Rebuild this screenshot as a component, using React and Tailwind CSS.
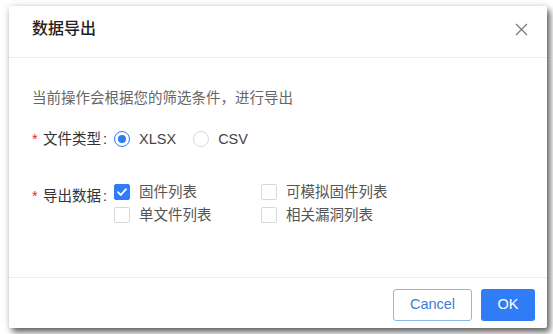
import React, { useState } from 'react';

const font = { fontFamily: '"Liberation Sans", "Noto Sans CJK SC", sans-serif' };

function Radio({ checked, label, onClick }) {
  return (
    <label onClick={onClick} className="flex items-center cursor-pointer">
      <span
        className={`w-[16px] h-[16px] rounded-full border flex items-center justify-center bg-white ${
          checked ? 'border-[#2f7cf6]' : 'border-[#d9d9d9]'
        }`}
      >
        {checked && <span className="w-[8px] h-[8px] rounded-full bg-[#2f7cf6]" />}
      </span>
      <span className="ml-[9px] text-[#444]">{label}</span>
    </label>
  );
}

function Check({ checked, label, onClick }) {
  return (
    <label onClick={onClick} className="flex items-center h-[20px] cursor-pointer">
      <span
        className={`w-[16px] h-[16px] rounded-[2px] border flex items-center justify-center ${
          checked ? 'bg-[#2f7cf6] border-[#2f7cf6]' : 'bg-white border-[#d9d9d9]'
        }`}
      >
        {checked && (
          <svg width="10" height="8" viewBox="0 0 10 8" fill="none">
            <path d="M1 4.2 L3.8 7 L9 1.2" stroke="white" strokeWidth="1.8" strokeLinecap="round" strokeLinejoin="round" />
          </svg>
        )}
      </span>
      <span className="ml-[9px] text-[#555]">{label}</span>
    </label>
  );
}

export default function App() {
  const [type, setType] = useState('xlsx');
  const [items, setItems] = useState({ fw: true, sim: false, single: false, vuln: false });
  const toggle = (k) => setItems({ ...items, [k]: !items[k] });

  return (
    <div className="w-[553px] h-[334px] bg-white overflow-hidden pt-[6px] pl-[9px]" style={font}>
      <div className="w-[538px] h-[322px] bg-white rounded-[2px] flex flex-col shadow-[3px_4px_6px_rgba(0,0,0,0.6),0_0_9px_rgba(0,0,0,0.12)]">
        {/* Header */}
        <div className="h-[52px] border-b border-[#ececec] flex items-center justify-between pl-[23px] pr-[19px] pb-[6px]">
          <span className="text-[16px] leading-[20px] font-medium text-[#222]">数据导出</span>
          <svg width="13" height="13" viewBox="0 0 13 13" className="mt-[1px]">
            <path d="M1 1 L12 12 M12 1 L1 12" stroke="#777" strokeWidth="1.2" />
          </svg>
        </div>

        {/* Body */}
        <div className="flex-1 pl-[23px] pt-[30px] text-[14.5px] leading-[20px]">
          <div className="text-[#666]">当前操作会根据您的筛选条件，进行导出</div>

          <div className="flex items-center mt-[21px]">
            <span className="text-[#f5222d] w-[11px] leading-[20px]">*</span>
            <span className="text-[#333]">文件类型</span>
            <span className="text-[#333] ml-[2px] mr-[7px]">:</span>
            <Radio checked={type === 'xlsx'} label="XLSX" onClick={() => setType('xlsx')} />
            <div className="w-[17px]" />
            <Radio checked={type === 'csv'} label="CSV" onClick={() => setType('csv')} />
          </div>

          <div className="flex items-start mt-[33px]">
            <div className="flex items-center pt-[4px]">
              <span className="text-[#f5222d] w-[11px]">*</span>
              <span className="text-[#333]">导出数据</span>
              <span className="text-[#333] ml-[2px] mr-[7px]">:</span>
            </div>
            <div className="grid grid-cols-[147px_auto] gap-y-[3px]">
              <Check checked={items.fw} label="固件列表" onClick={() => toggle('fw')} />
              <Check checked={items.sim} label="可模拟固件列表" onClick={() => toggle('sim')} />
              <Check checked={items.single} label="单文件列表" onClick={() => toggle('single')} />
              <Check checked={items.vuln} label="相关漏洞列表" onClick={() => toggle('vuln')} />
            </div>
          </div>
        </div>

        {/* Footer */}
        <div className="h-[51px] border-t border-[#ececec] flex items-start justify-end gap-[9px] pt-[11px] pr-[12px] text-[14.5px]">
          <button className="h-[32px] w-[79px] rounded-[3px] border border-[#8fb5ef] text-[#3f7bd9] bg-white">Cancel</button>
          <button className="h-[32px] w-[54px] rounded-[3px] bg-[#2f7cf6] text-white">OK</button>
        </div>
      </div>
    </div>
  );
}
